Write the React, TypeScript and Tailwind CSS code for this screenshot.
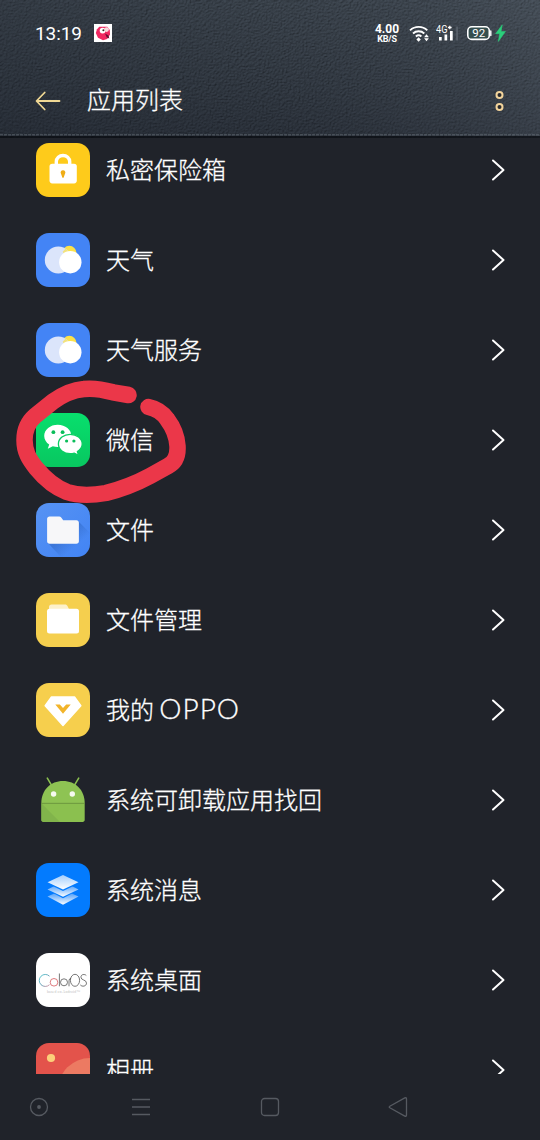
import type { ReactNode } from 'react'

const tile = 'h-[54px] w-[54px] shrink-0 overflow-hidden rounded-[13px]'

function LockIcon() {
  return (
    <svg viewBox="0 0 54 54" className={`${tile} bg-[#fecb1b]`}>
      <path d="M20.300 22v-3.300a6.700 6.200 0 0 1 13.400 0V22" fill="none" stroke="#fff" strokeWidth="3.400" />
      <rect x="13.500" y="20.800" width="27.300" height="19.600" rx="2.800" fill="#fff" />
      <path d="M27 27.300a2.300 2.300 0 0 1 1.900 3.700L27.600 34.700h-1.200L25.100 31a2.300 2.300 0 0 1 1.900-3.700z" fill="#efad16" />
    </svg>
  )
}

function WeatherIcon() {
  return (
    <svg viewBox="0 0 54 54" className={`${tile} bg-[#4384f5]`}>
      <circle cx="33.300" cy="20" r="7.200" fill="#fbe24b" />
      <circle cx="22.300" cy="27" r="13.500" fill="#dbe5fb" />
      <path d="M29.500 15.700q2.700 1.800 4.200 4.500l-5 2-2-3.500z" fill="#f2e27c" />
      <circle cx="34.300" cy="29.200" r="11.200" fill="#fff" />
    </svg>
  )
}

function WeChatIcon() {
  return (
    <svg viewBox="0 0 54 54" className={tile}>
      <defs>
        <linearGradient id="wechat" x1="0" y1="0" x2="0" y2="1">
          <stop offset="0" stopColor="#08df6d" />
          <stop offset="1" stopColor="#08c760" />
        </linearGradient>
      </defs>
      <rect width="54" height="54" fill="url(#wechat)" />
      <path d="M21.800 11.700c-7.600 0-13.600 4.900-13.600 11.200 0 3.500 2 6.600 5 8.600l-1.400 4.200 5-2.400c1.600.5 3.300.7 5 .7 7.600 0 13.600-4.900 13.600-11.100s-6-11.200-13.600-11.200z" fill="#fff" />
      <circle cx="17.400" cy="19.200" r="1.900" fill="#0bbd5a" />
      <circle cx="26.600" cy="19.200" r="1.900" fill="#0bbd5a" />
      <path d="M34.200 21.300c-6.400 0-11.800 4.200-11.800 9.700s5.400 9.700 11.800 9.700c1.500 0 2.800-.2 4.100-.6l4.200 2.200-1.100-3.700c2.700-1.800 4.800-4.600 4.800-7.600 0-5.500-5.600-9.700-12-9.700z" fill="#fff" stroke="#0bce63" strokeWidth="1.300" />
      <circle cx="30.600" cy="28" r="1.600" fill="#0bbd5a" />
      <circle cx="37.900" cy="28" r="1.600" fill="#0bbd5a" />
    </svg>
  )
}

function FilesIcon() {
  return (
    <svg viewBox="0 0 54 54" className={tile}>
      <defs>
        <linearGradient id="files" x1="0" y1="0" x2="1" y2="1">
          <stop offset="0" stopColor="#5793f3" />
          <stop offset="1" stopColor="#4284f4" />
        </linearGradient>
        <linearGradient id="files-shadow" x1="0" y1="0" x2="1" y2="1">
          <stop offset=".4" stopColor="#2b62bd" stopOpacity=".5" />
          <stop offset=".68" stopColor="#2b62bd" stopOpacity="0" />
        </linearGradient>
      </defs>
      <rect width="54" height="54" fill="url(#files)" />
      <path d="M42 18l12 12v24H25L12 40z" fill="url(#files-shadow)" />
      <path d="M13.600 13.500h9.600c.9 0 1.500.3 2 1l2 2.800h13.200c1.500 0 2.500 1 2.500 2.500v18.400c0 1.500-1 2.500-2.500 2.500H13.600c-1.500 0-2.500-1-2.500-2.500V16c0-1.500 1-2.500 2.500-2.500z" fill="#f7f7f9" />
    </svg>
  )
}

function FileManagerIcon() {
  return (
    <svg viewBox="0 0 54 54" className={`${tile} bg-[#f5cf4e]`}>
      <path d="M15.500 11.500h13.500c1.300 0 2 .6 2.500 1.600l1.500 3.200V22H13v-8c0-1.500 1-2.500 2.500-2.500z" fill="#fdf1cb" />
      <rect x="11" y="15.800" width="32" height="24.600" rx="2.500" fill="#fff" />
    </svg>
  )
}

function MyOppoIcon() {
  return (
    <svg viewBox="0 0 54 54" className={`${tile} bg-[#f6cf4d]`}>
      <path d="M15.500 14h23l6.300 8.700L27 42.500 9.200 22.700z" fill="#fff" stroke="#fff" strokeWidth="1.500" strokeLinejoin="round" />
      <path d="M19.300 21.500h4.500l3.200 3.600 3.200-3.600h4.500L27 30.700z" fill="#f2b42a" />
    </svg>
  )
}

function AndroidIcon() {
  return (
    <svg viewBox="0 0 54 54" className="h-[54px] w-[54px] shrink-0">
      <path d="M11.300 5.200l4.200 7M42.700 5.200l-4.200 7" stroke="#8bc04f" strokeWidth="1.600" strokeLinecap="round" />
      <path d="M5.300 30.200C5.300 17 14.500 8 27 8s21.700 9 21.700 22.200z" fill="#8ec353" />
      <path d="M5.300 30.200h43.400v16.600c0 1.300-.8 2.100-2.100 2.100H7.400c-1.300 0-2.100-.8-2.100-2.100z" fill="#8bc04f" />
      <path d="M5.300 30.200L24 48.900H7.400c-1.300 0-2.100-.8-2.100-2.100z" fill="#7cab49" opacity=".6" />
      <path d="M5.300 30.300h43.400" stroke="#6f9d40" strokeWidth=".9" />
      <circle cx="17.600" cy="21" r="2.700" fill="#f6faf0" />
      <circle cx="36.300" cy="21" r="2.700" fill="#f6faf0" />
    </svg>
  )
}

function SystemMessageIcon() {
  return (
    <svg viewBox="0 0 54 54" className={`${tile} bg-[#037bfe]`}>
      <defs>
        <linearGradient id="layer" x1="0" y1="0" x2="0" y2="1">
          <stop offset="0" stopColor="#a3cefd" />
          <stop offset="1" stopColor="#fff" />
        </linearGradient>
        <linearGradient id="layer-low" x1="0" y1="0" x2="0" y2="1">
          <stop offset=".3" stopColor="#5ba6fb" />
          <stop offset="1" stopColor="#fff" />
        </linearGradient>
      </defs>
      <path d="M27 26.500l15.500 7L27 41.800l-15.500-8.300z" fill="url(#layer-low)" />
      <path d="M27 19.500l15.500 7.500L27 35.200 11.500 27z" fill="#037bfe" />
      <path d="M27 18.500l15.500 8L27 33.800l-15.500-7.300z" fill="url(#layer-low)" />
      <path d="M27 13.500l15.500 7L27 28 11.500 20.500z" fill="#037bfe" />
      <path d="M27 12l15.500 7.200L27 26.600l-15.500-7.400z" fill="url(#layer)" />
    </svg>
  )
}

function ColorOsIcon() {
  return (
    <div className={`${tile} flex flex-col items-center bg-white pt-[17px]`}>
      <svg viewBox="0 0 54 28" className="h-7 w-[54px]">
        <defs>
          <linearGradient id="color-c" x1="0" y1="0" x2="1" y2="1">
            <stop offset="0" stopColor="#35c4cc" />
            <stop offset=".55" stopColor="#498ca8" />
            <stop offset="1" stopColor="#d67c8c" />
          </linearGradient>
        </defs>
        <g fill="none" stroke="#555" strokeWidth=".8">
          <path d="M13.500 6.200a6 6 0 1 0 0 8.500" stroke="url(#color-c)" />
          <circle cx="18" cy="12.300" r="3.800" stroke="#d65a60" />
          <path d="M23.400 3.500v12.800" />
          <circle cx="28" cy="12.300" r="3.500" />
          <path d="M33 16.300v-5.500q0-2.400 2-2.400" />
          <ellipse cx="39" cy="10.300" rx="4.600" ry="6" />
          <path d="M50.300 5.500c-1.500-1.600-5.300-1.400-5.400 1.600 0 3.600 5.600 2.200 5.600 6 0 3.300-4.500 4-6.200 1.800" />
        </g>
        <text x="27.500" y="22.700" textAnchor="middle" fontSize="3.700" fontFamily="Liberation Serif, serif" fill="#bbb" textLength="33">based on Android™</text>
      </svg>
    </div>
  )
}

function AlbumIcon() {
  return (
    <svg viewBox="0 0 54 54" className={`${tile} bg-[#e3534b]`}>
      <circle cx="15" cy="15" r="4.100" fill="#fccf7a" />
      <circle cx="54" cy="47" r="32" fill="#ec7a62" />
    </svg>
  )
}

const apps: { name: ReactNode; icon: ReactNode }[] = [
  { name: '私密保险箱', icon: <LockIcon /> },
  { name: '天气', icon: <WeatherIcon /> },
  { name: '天气服务', icon: <WeatherIcon /> },
  { name: '微信', icon: <WeChatIcon /> },
  { name: '文件', icon: <FilesIcon /> },
  { name: '文件管理', icon: <FileManagerIcon /> },
  {
    name: (
      <>
        我的 <span className="font-['Lato','Noto_Sans_CJK_SC',sans-serif] text-[28px] leading-none font-light tracking-[1px]">OPPO</span>
      </>
    ),
    icon: <MyOppoIcon />,
  },
  { name: '系统可卸载应用找回', icon: <AndroidIcon /> },
  { name: '系统消息', icon: <SystemMessageIcon /> },
  { name: '系统桌面', icon: <ColorOsIcon /> },
  { name: '相册', icon: <AlbumIcon /> },
]

function Leather() {
  return (
    <svg className="absolute inset-0 h-full w-full" viewBox="0 0 540 138" preserveAspectRatio="none">
      <defs>
        <filter id="grain" x="0" y="0" width="100%" height="100%" colorInterpolationFilters="sRGB">
          <feTurbulence type="fractalNoise" baseFrequency=".55 .7" numOctaves="2" seed="7" result="n" />
          <feDiffuseLighting in="n" surfaceScale="1.300" diffuseConstant=".86" lightingColor="#57626e">
            <feDistantLight azimuth="235" elevation="52" />
          </feDiffuseLighting>
        </filter>
        <filter id="crease" x="0" y="0" width="100%" height="100%" colorInterpolationFilters="sRGB">
          <feTurbulence type="turbulence" baseFrequency=".02 .075" numOctaves="3" seed="12" />
          <feColorMatrix values="0 0 0 0 .07  0 0 0 0 .09  0 0 0 0 .12  -16 0 0 0 .75" />
        </filter>
        <linearGradient id="shade" x1="0" y1="0" x2="0" y2="1">
          <stop offset="0" stopColor="#39424c" stopOpacity=".4" />
          <stop offset=".5" stopColor="#262d37" stopOpacity=".4" />
          <stop offset="1" stopColor="#1b202a" stopOpacity=".55" />
        </linearGradient>
        <linearGradient id="sheen" x1="0" y1="0" x2="1" y2="0">
          <stop offset="0" stopColor="#1c222c" stopOpacity=".25" />
          <stop offset=".5" stopColor="#1c222c" stopOpacity=".05" />
          <stop offset="1" stopColor="#8793a0" stopOpacity=".14" />
        </linearGradient>
      </defs>
      <rect width="540" height="138" filter="url(#grain)" />
      <g transform="rotate(-16 270 69)">
        <rect x="-40" y="-120" width="620" height="380" filter="url(#crease)" opacity=".5" />
      </g>
      <rect width="540" height="138" fill="url(#shade)" />
      <rect width="540" height="138" fill="url(#sheen)" />
      <path d="M0 134.800h540" stroke="#6c757d" strokeWidth="1.500" strokeDasharray="3 1" opacity=".45" />
      <path d="M0 137h540" stroke="#080b11" strokeWidth="1.500" />
    </svg>
  )
}

function StatusBar() {
  return (
    <div className="flex h-[66px] items-center pr-[34px] pl-[35px] text-white">
      <span className="w-[47px] font-['Roboto',sans-serif] text-[19px] leading-none tracking-[-0.1px]">13:19</span>
      <svg viewBox="0 0 18 18" className="ml-[12px] h-[18px] w-[18px]">
        <rect width="18" height="18" fill="#fff" />
        <path d="M3 5.200l2.300-2.500h8l2.500 3.200.2 4.700-2.800 4.500-4.200 1.200-5-2.500L1.800 9z" fill="#f02861" />
        <circle cx="8.600" cy="6.600" r="2.900" fill="#fff" />
        <circle cx="12.600" cy="5.600" r="2.300" fill="#f8d9dc" />
        <circle cx="9.400" cy="6.200" r="1" fill="#3c2b26" />
        <path d="M11 9.500l3.500 2 .8 3-2.500-1z" fill="#681035" />
      </svg>
      <div className="ml-auto flex w-[26px] flex-col items-center font-['Roboto',sans-serif] font-bold">
        <span className="text-[12px] leading-[11px]">4.00</span>
        <span className="text-[9px] leading-[8px] tracking-[-0.2px]">KB/S</span>
      </div>
      <svg viewBox="0 0 21 17" className="ml-[9px] h-[17px] w-[21px]" fill="none" stroke="#fff" strokeWidth="1.900">
        <path d="M1 5.400a12.500 12.500 0 0 1 17.300 0M4 8.500a8.400 8.400 0 0 1 11.300 0M6.900 11.500a4.300 4.300 0 0 1 5.500 0" />
        <path d="M9.600 12.300l2.200 2.200-2.200 2.200-2.200-2.200z" fill="#fff" stroke="none" />
        <path d="M17.500 9.200l2.400 3h-4.800zM17.500 16.200l2.400-3h-4.800z" fill="#fff" stroke="none" />
      </svg>
      <svg viewBox="0 0 24 18" className="ml-[6px] h-[18px] w-[24px]">
        <text x="0" y="8.800" fontSize="10" fontFamily="Roboto, sans-serif" fill="#fff" textLength="11.500" lengthAdjust="spacingAndGlyphs">4G</text>
        <path d="M12 3.500h3.600M13.800 1.700v3.600" stroke="#fff" strokeWidth="1.300" />
        <path d="M3 13h2.700v3.500H3zM8.500 10.500h2.700v6H8.500zM14 7h2.700v9.500H14z" fill="#fff" />
        <path d="M20.300 2.500h1.500v14h-1.500z" fill="#5d656f" />
      </svg>
      <svg viewBox="0 0 40 18" className="ml-[6px] h-[18px] w-[40px]">
        <rect x="1.800" y="2.800" width="21.500" height="12.600" rx="4" fill="#33554f" fillOpacity=".65" stroke="#fff" strokeWidth="1.600" />
        <path d="M24.800 7v4.500" stroke="#fff" strokeWidth="1.400" strokeLinecap="round" />
        <text x="12.800" y="13.200" textAnchor="middle" fontSize="11.500" fontFamily="Roboto, sans-serif" fill="#fff">92</text>
        <path d="M36.300.8L29.500 9.800h4.100l-1.300 7.700 7.200-10h-4.400z" fill="#2bcf7b" stroke="#2bcf7b" strokeWidth=".5" />
      </svg>
    </div>
  )
}

function TitleBar() {
  return (
    <div className="flex h-[69px] items-center pr-[35px] pl-[35px]">
      <svg viewBox="0 0 26 20" className="h-5 w-[26px]" fill="none" stroke="#f0d894" strokeWidth="1.800" strokeLinecap="round" strokeLinejoin="round">
        <path d="M9.700 1.500L1.500 10l8.200 8.500M2 10h22.500" />
      </svg>
      <h1 className="ml-[26px] pb-[3px] text-[24px] leading-9 font-light text-white [-webkit-text-stroke:0.3px_white]">应用列表</h1>
      <svg viewBox="0 0 11 22" className="ml-auto h-[22px] w-[11px]" fill="#292a2e" stroke="#f3d49b" strokeWidth="2">
        <circle cx="5.500" cy="5" r="3" />
        <circle cx="5.500" cy="17" r="3" />
      </svg>
    </div>
  )
}

function NavBar() {
  return (
    <nav className="grid h-[66px] grid-cols-[77px_128px_130px_126px] items-center justify-items-center">
      <svg viewBox="0 0 20 20" className="size-5" fill="none" stroke="#565a61" strokeWidth="1.300">
        <circle cx="10" cy="10" r="8.500" />
        <circle cx="10" cy="10" r="1.900" fill="#565a61" stroke="none" />
      </svg>
      <svg viewBox="0 0 20 20" className="size-5" stroke="#565a61" strokeWidth="1.300">
        <path d="M1 2.500h18M1 10h18M1 17.500h18" />
      </svg>
      <svg viewBox="0 0 20 20" className="size-5" fill="none" stroke="#565a61" strokeWidth="1.300">
        <rect x="1.500" y="1.500" width="17" height="17" rx="3" />
      </svg>
      <svg viewBox="0 0 20 20" className="size-5" fill="none" stroke="#565a61" strokeWidth="1.300" strokeLinejoin="round">
        <path d="M1.800 9.200L16.800.9q1.700-.6 1.700 1v16.200q0 1.600-1.700 1L1.800 10.800q-1.200-.8 0-1.600z" />
      </svg>
    </nav>
  )
}

export default function App() {
  return (
    <div className="relative flex h-[1140px] w-[540px] flex-col overflow-hidden bg-[#20232a] font-['Noto_Sans_CJK_SC',sans-serif]">
      <header className="relative h-[138px] shrink-0 bg-[#323a45]">
        <Leather />
        <div className="relative">
          <StatusBar />
          <TitleBar />
        </div>
      </header>

      <main className="h-[936px] shrink-0 overflow-hidden">
        <ul className="-mt-[13px]">
          {apps.map((app, i) => (
            <li key={i} className="flex h-[90px] items-center pr-[34px] pl-[36px]">
              {app.icon}
              <span className="ml-[16px] pb-[3px] text-[24px] leading-9 font-light whitespace-nowrap text-white [-webkit-text-stroke:0.3px_white]">{app.name}</span>
              <svg viewBox="0 0 16 24" className="ml-auto h-6 w-4" fill="none" stroke="#fff" strokeWidth="2" strokeLinecap="round" strokeLinejoin="round">
                <path d="M3 2.500L13.500 12 3 21.500" />
              </svg>
            </li>
          ))}
        </ul>
      </main>

      <NavBar />

      {/* hand-drawn marker around the WeChat row */}
      <svg viewBox="0 0 180 130" className="pointer-events-none absolute top-[375px] left-[10px] h-[130px] w-[180px]" fill="none" stroke="#eb3749" strokeWidth="16.500" strokeLinecap="round" strokeLinejoin="round">
        <path d="M118.500 20L103 17.300C91 14 82 13 74 14C62 15 52 20 43 26.500L25 41C17 48 14.500 56 14.500 65C14.500 77 19 84 26 93C35 104 44 112 57 117C69 121 82 120.500 96 118C112 114 127 108 140 101L158 91C166 87 168 80 167.500 71C167 62 163 52 157 44C152 37 146 33.500 138.500 32" />
      </svg>
    </div>
  )
}
